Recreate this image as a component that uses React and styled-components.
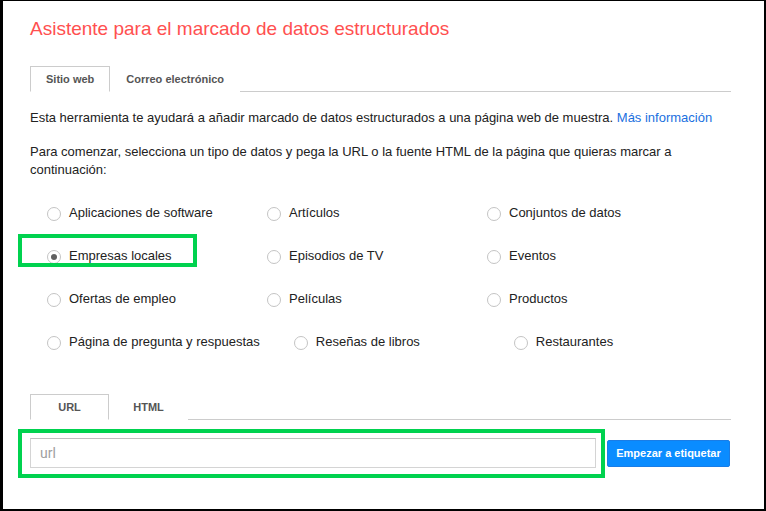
import React, { useState } from 'react'
import styled, { createGlobalStyle } from 'styled-components'

const GlobalStyle = createGlobalStyle`
  html, body {
    margin: 0;
    padding: 0;
    background: #000;
  }
  * {
    box-sizing: border-box;
  }
`

const DATA_TYPES = [
  ['Aplicaciones de software', 'Artículos', 'Conjuntos de datos'],
  ['Empresas locales', 'Episodios de TV', 'Eventos'],
  ['Ofertas de empleo', 'Películas', 'Productos'],
  ['Página de pregunta y respuestas', 'Reseñas de libros', 'Restaurantes'],
]

export default function App() {
  const [site, setSite] = useState('web')
  const [source, setSource] = useState('url')
  const [selected, setSelected] = useState('Empresas locales')
  const [url, setUrl] = useState('')

  return (
    <>
      <GlobalStyle />
      <Frame>
        <Title>Asistente para el marcado de datos estructurados</Title>

        <TabBar>
          <Tab active={site === 'web'} onClick={() => setSite('web')}>Sitio web</Tab>
          <Tab active={site === 'mail'} onClick={() => setSite('mail')}>Correo electrónico</Tab>
        </TabBar>

        <Intro>
          Esta herramienta te ayudará a añadir marcado de datos estructurados a una página web de muestra.{' '}
          <Link href="#">Más información</Link>
        </Intro>

        <Intro>
          Para comenzar, selecciona un tipo de datos y pega la URL o la fuente HTML de la página que quieras marcar a
          continuación:
        </Intro>

        <Options>
          {DATA_TYPES.map((row, i) => (
            <OptionRow key={i}>
              {row.map((label) => (
                <Option key={label} onClick={() => setSelected(label)}>
                  {label === selected && <Highlight />}
                  <Radio checked={label === selected} />
                  {label}
                </Option>
              ))}
            </OptionRow>
          ))}
        </Options>

        <TabBar $gap={18}>
          <Tab active={source === 'url'} onClick={() => setSource('url')}>URL</Tab>
          <Tab active={source === 'html'} onClick={() => setSource('html')}>HTML</Tab>
        </TabBar>

        <InputRow>
          <InputWrap>
            <InputHighlight />
            <UrlInput placeholder="url" value={url} onChange={(e) => setUrl(e.target.value)} />
          </InputWrap>
          <StartButton>Empezar a etiquetar</StartButton>
        </InputRow>
      </Frame>
    </>
  )
}

const Frame = styled.div`
  width: 766px;
  height: 511px;
  background: #fff;
  border-style: solid;
  border-color: #000;
  border-width: 1px 2px 2px 3px;
  padding: 16px 33px 0 27px;
  font-family: Arial, "Liberation Sans", sans-serif;
  color: #222;
`

const Title = styled.h1`
  margin: 0 0 25px;
  font-size: 19px;
  line-height: 24px;
  font-weight: normal;
  color: #ff5050;
`

const TabBar = styled.div`
  display: flex;
  height: 26px;
  border-bottom: 1px solid #ccc;
  margin-bottom: ${(p) => p.$gap || 17}px;
`

const Tab = styled.div.withConfig({ shouldForwardProp: (p) => p !== 'active' })`
  min-width: 79px;
  height: 26px;
  padding: 0 15px;
  display: flex;
  align-items: center;
  justify-content: center;
  font-size: 11px;
  font-weight: bold;
  color: #555;
  cursor: pointer;
  border: 1px solid ${(p) => (p.active ? '#ccc' : 'transparent')};
  border-bottom-color: ${(p) => (p.active ? '#fff' : 'transparent')};
  background: #fff;
`

const Intro = styled.p`
  margin: 0 0 16px;
  font-size: 13px;
  line-height: 18px;
`

const Link = styled.a`
  color: #1a6fe0;
  text-decoration: none;
`

const Options = styled.div`
  display: flex;
  flex-direction: column;
  gap: 25px;
  margin: 24px 0 44px;
  padding-left: 17px;
`

const OptionRow = styled.div`
  display: flex;
`

const Option = styled.label`
  position: relative;
  display: flex;
  align-items: center;
  flex-shrink: 0;
  min-width: 220px;
  padding-right: 34px;
  height: 18px;
  font-size: 13px;
  white-space: nowrap;
  cursor: pointer;
`

const Radio = styled.span.withConfig({ shouldForwardProp: (p) => p !== 'checked' })`
  width: 14px;
  height: 14px;
  margin: 3px 8px 0 0;
  border-radius: 50%;
  border: 1px solid #c4c4c4;
  background: #fff;
  display: flex;
  align-items: center;
  justify-content: center;
  flex-shrink: 0;

  &::after {
    content: '';
    display: ${(p) => (p.checked ? 'block' : 'none')};
    width: 6px;
    height: 6px;
    border-radius: 50%;
    background: #5f5f5f;
  }
`

const Highlight = styled.span`
  position: absolute;
  left: -29px;
  top: -12px;
  width: 179px;
  height: 33px;
  border: 4px solid #00d24f;
  pointer-events: none;
`

const InputRow = styled.div`
  display: flex;
  align-items: center;
  gap: 11px;
  width: 700px;
`

const InputWrap = styled.div`
  position: relative;
  width: 566px;
`

const InputHighlight = styled.span`
  position: absolute;
  left: -12px;
  top: -9px;
  right: -9px;
  bottom: -10px;
  border: 4px solid #00d24f;
  pointer-events: none;
`

const UrlInput = styled.input`
  display: block;
  width: 566px;
  height: 30px;
  padding: 0 9px;
  border: 1px solid #d4d4d4;
  border-top-color: #c0c0c0;
  font-family: Roboto, Arial, sans-serif;
  font-size: 14px;
  color: #222;
  outline: none;

  &::placeholder {
    color: #a0a0a0;
  }
`

const StartButton = styled.button`
  width: 123px;
  height: 27px;
  padding: 0;
  border: 1px solid #1a7de6;
  border-radius: 2px;
  background: #0a8cff;
  color: #fff;
  font-family: Arial, "Liberation Sans", sans-serif;
  font-size: 11px;
  font-weight: bold;
  cursor: pointer;
`
